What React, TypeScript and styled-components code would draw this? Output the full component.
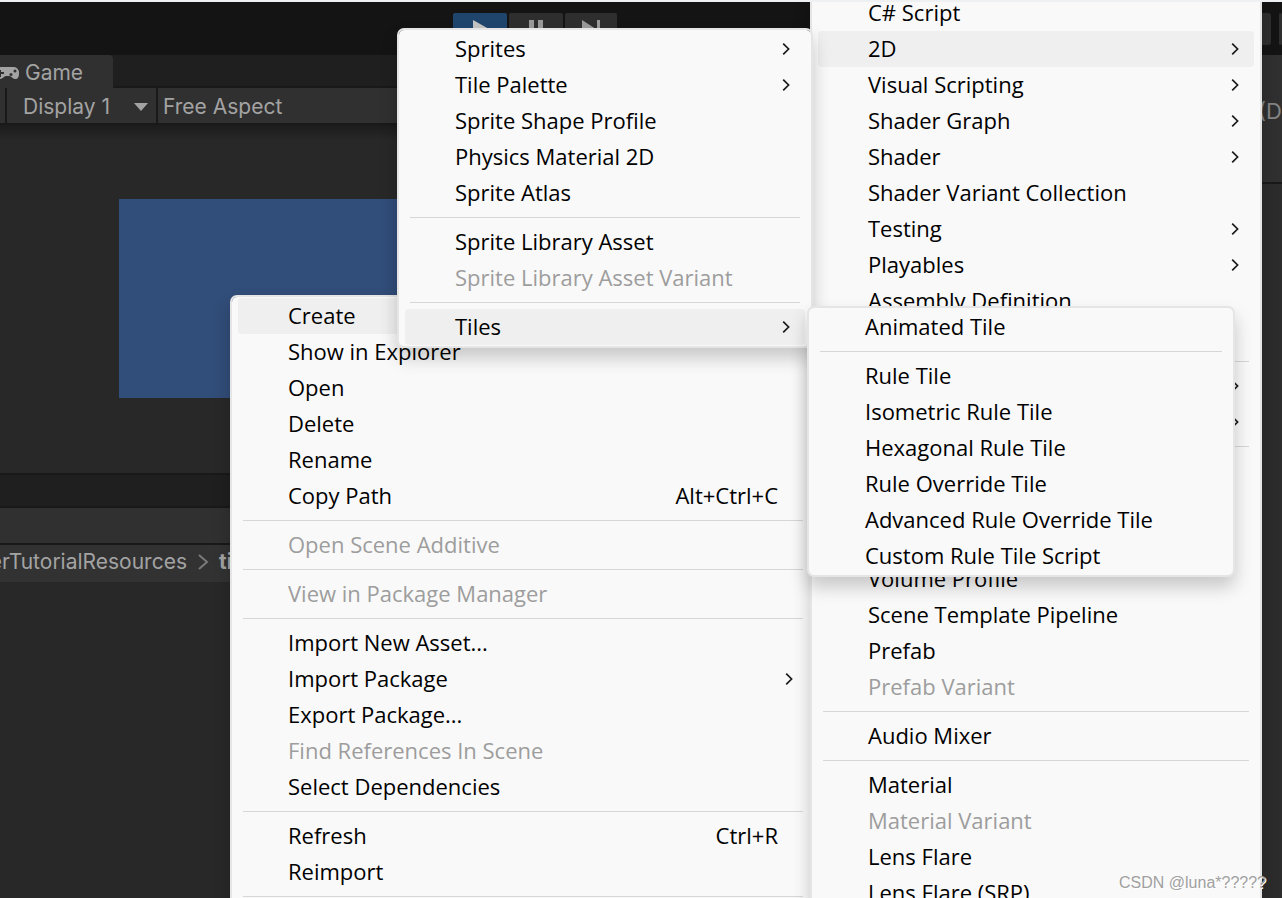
import React from "react";
import styled, { createGlobalStyle } from "styled-components";

const GlobalStyle = createGlobalStyle`
  * { box-sizing: border-box; }
  body { margin: 0; background: #282828; }
  button { font: inherit; border: 0; margin: 0; text-align: left; }
`;

const Editor = styled.div`
  position: relative;
  display: flex;
  flex-direction: column;
  height: 100vh;
  overflow: hidden;
  border-top: 2px solid #eff0f2;
  background: #141414;
  color: #a3a3a3;
  font: 21px/26px Inter, "Liberation Sans", sans-serif;
`;

const TopBar = styled.header`
  display: flex;
  justify-content: space-between;
  flex: 0 0 53px;
  padding: 11px 0 0 453px;
`;

const ButtonGroup = styled.div`
  display: flex;
  gap: 2px;
`;

const PlayButton = styled.button<{ $active?: boolean }>`
  display: flex;
  align-items: center;
  justify-content: center;
  width: 54px;
  height: 32px;
  padding: 0;
  border-radius: 2px;
  background: ${(p) => (p.$active ? "#20456d" : "#2e2e2e")};
  &:last-child { width: 52px; }
`;

const LayoutButtons = styled.div`
  display: flex;
  gap: 8px;
`;

const LayoutButton = styled.button<{ $width: number }>`
  width: ${(p) => p.$width}px;
  height: 32px;
  padding: 0;
  border-radius: 3px;
  background: #2e2e2e;
`;

const Workspace = styled.div`
  display: flex;
  flex: 1;
  min-height: 0;
`;

const MainColumn = styled.div`
  display: flex;
  flex-direction: column;
  flex: 1;
  min-width: 0;
`;

const TabStrip = styled.div`
  display: flex;
  flex: 0 0 33px;
  background: #1f1f1f;
  box-shadow: inset 0 -2px #191919;
`;

const Tab = styled.button`
  display: flex;
  align-items: center;
  gap: 6px;
  width: 113px;
  padding: 2px 0 0;
  border-radius: 0 4px 0 0;
  color: #a3a3a3;
  background: #303030;
`;

const Toolbar = styled.div`
  display: flex;
  flex: 0 0 37px;
  border-bottom: 2px solid #191919;
  background: #303030;
`;

const ToolbarStub = styled.div`
  width: 7px;
  border-right: 2px solid #191919;
`;

const ToolButton = styled.button<{ $width?: number }>`
  display: flex;
  align-items: center;
  justify-content: space-between;
  width: ${(p) => (p.$width ? `${p.$width}px` : "auto")};
  padding: 2px 8px 0 16px;
  border-right: 2px solid #191919;
  color: #a3a3a3;
  background: none;
  & + & { padding-left: 5px; border-right: 0; }
`;

const Viewport = styled.div`
  flex: 0 0 348px;
  padding: 74px 300px 0 119px;
  background: linear-gradient(#1c1c1c, #282828 16px);
`;

const Camera = styled.div`
  height: 199px;
  background: #314d79;
`;

const ProjectTabs = styled(TabStrip)`
  flex-basis: 35px;
  border-top: 2px solid #191919;
`;

const Breadcrumb = styled.nav`
  display: flex;
  align-items: center;
  gap: 10px;
  flex: 0 0 37px;
  padding-bottom: 3px;
  background: #323232;
  white-space: nowrap;
  a { color: #a3a3a3; text-decoration: none; }
  > a { font-weight: 700; }
`;

const Crop = styled.span`
  display: flex;
  justify-content: flex-end;
  width: 187px;
  overflow: hidden;
`;

const Assets = styled.div`
  flex: 1;
  background: #282828;
`;

const Inspector = styled.aside`
  display: flex;
  flex-direction: column;
  flex: 0 0 22px;
  background: #2c2c2c;
`;

const InspectorHead = styled.div`
  flex: 0 0 129px;
  padding: 43px 0 0 2px;
  overflow: hidden;
  border-bottom: 2px solid #191919;
  background: #303030;
  color: #858585;
  font-size: 22px;
`;

const MenuPanel = styled.div<{ $x: number; $y: number; $w: number }>`
  position: absolute;
  left: ${(p) => p.$x}px;
  top: ${(p) => p.$y}px;
  width: ${(p) => p.$w}px;
  padding: 1px 6px;
  border: 2px solid #e5e5e5;
  border-radius: 7px;
  background: #f9f9f9;
  background-clip: padding-box;
  box-shadow: 0 10px 18px rgba(0, 0, 0, 0.2);
  color: #000;
  font: 22px/34px "Open Sans", "Noto Sans", sans-serif;
`;

const MenuItem = styled.button<{ $active?: boolean }>`
  display: flex;
  align-items: center;
  justify-content: space-between;
  width: 100%;
  height: 36px;
  padding: 0 30px 0 50px;
  border-radius: 4px;
  white-space: nowrap;
  color: #000;
  background: ${(p) => (p.$active ? "#efefef" : "transparent")};
  &:disabled { color: #9d9d9d; }
  svg { margin-right: -15px; margin-left: auto; }
`;

const ItemText = styled.span`
  padding-bottom: 2px;
`;

const Separator = styled.hr`
  height: 1px;
  margin: 6px 5px;
  border: 0;
  background: #d7d7d7;
`;

const Watermark = styled.div`
  position: absolute;
  right: 16px;
  bottom: 3px;
  color: #a0a0a0;
  font: 16px/24px "Liberation Sans", sans-serif;
  text-shadow: 1px 1px #fff;
`;

type Entry = { label?: string; keys?: string; sub?: boolean; off?: boolean; active?: boolean } | "-";

const assetEntries: Entry[] = [
  { label: "Create", active: true },
  { label: "Show in Explorer" },
  { label: "Open" },
  { label: "Delete" },
  { label: "Rename" },
  { label: "Copy Path", keys: "Alt+Ctrl+C" },
  "-",
  { label: "Open Scene Additive", off: true },
  "-",
  { label: "View in Package Manager", off: true },
  "-",
  { label: "Import New Asset..." },
  { label: "Import Package", sub: true },
  { label: "Export Package..." },
  { label: "Find References In Scene", off: true },
  { label: "Select Dependencies" },
  "-",
  { label: "Refresh", keys: "Ctrl+R" },
  { label: "Reimport" },
  "-",
  {},
];

const createEntries: Entry[] = [
  { label: "C# Script" },
  { label: "2D", sub: true, active: true },
  { label: "Visual Scripting", sub: true },
  { label: "Shader Graph", sub: true },
  { label: "Shader", sub: true },
  { label: "Shader Variant Collection" },
  { label: "Testing", sub: true },
  { label: "Playables", sub: true },
  { label: "Assembly Definition" },
  {},
  "-",
  { sub: true },
  { sub: true },
  "-",
  {},
  {},
  {},
  { label: "Volume Profile" },
  { label: "Scene Template Pipeline" },
  { label: "Prefab" },
  { label: "Prefab Variant", off: true },
  "-",
  { label: "Audio Mixer" },
  "-",
  { label: "Material" },
  { label: "Material Variant", off: true },
  { label: "Lens Flare" },
  { label: "Lens Flare (SRP)" },
];

const twoDEntries: Entry[] = [
  { label: "Sprites", sub: true },
  { label: "Tile Palette", sub: true },
  { label: "Sprite Shape Profile" },
  { label: "Physics Material 2D" },
  { label: "Sprite Atlas" },
  "-",
  { label: "Sprite Library Asset" },
  { label: "Sprite Library Asset Variant", off: true },
  "-",
  { label: "Tiles", sub: true, active: true },
];

const tileEntries: Entry[] = [
  { label: "Animated Tile" },
  "-",
  { label: "Rule Tile" },
  { label: "Isometric Rule Tile" },
  { label: "Hexagonal Rule Tile" },
  { label: "Rule Override Tile" },
  { label: "Advanced Rule Override Tile" },
  { label: "Custom Rule Tile Script" },
];

const Chevron = () => (
  <svg width="8" height="12" viewBox="0 0 8 12" fill="none" stroke="#1b1b1b" strokeWidth="1.7">
    <path d="M1.2 .7L6.600 6 1.200 11.300" />
  </svg>
);

function Menu({ entries, x, y, w }: { entries: Entry[]; x: number; y: number; w: number }) {
  return (
    <MenuPanel role="menu" $x={x} $y={y} $w={w}>
      {entries.map((e, i) =>
        e === "-" ? (
          <Separator key={i} />
        ) : (
          <MenuItem key={i} role="menuitem" $active={e.active} disabled={e.off}>
            {e.label && <ItemText>{e.label}</ItemText>}
            {e.keys && <ItemText>{e.keys}</ItemText>}
            {e.sub && <Chevron />}
          </MenuItem>
        )
      )}
    </MenuPanel>
  );
}

export default function App() {
  return (
    <>
      <GlobalStyle />
      <Editor>
        <TopBar>
          <ButtonGroup>
            <PlayButton $active aria-label="Play">
              <svg width="18" height="18" viewBox="0 0 18 18" fill="#c4c4c4"><path d="M2 0l16 9-16 9z" /></svg>
            </PlayButton>
            <PlayButton aria-label="Pause">
              <svg width="18" height="18" viewBox="0 0 18 18" fill="#9a9a9a"><path d="M2 0h5v18H2zM11 0h5v18h-5z" /></svg>
            </PlayButton>
            <PlayButton aria-label="Step">
              <svg width="18" height="18" viewBox="0 0 18 18" fill="#9a9a9a"><path d="M0 0l14 9-14 9zM15 0h3v18h-3z" /></svg>
            </PlayButton>
          </ButtonGroup>
          <LayoutButtons>
            <LayoutButton $width={60} aria-label="Layers" />
            <LayoutButton $width={3} aria-label="Layout" />
          </LayoutButtons>
        </TopBar>
        <Workspace>
          <MainColumn>
            <TabStrip>
              <Tab>
                <svg width="19" height="14" viewBox="0 0 19 14">
                  <path fill="#a3a3a3" d="M0 1h14a5.500 5.500 0 0 1 5 6c0 4-1 6-4 6-2.500 0-3.500-3-5.500-3H6c-2 0-3 3-6 3z" />
                  <path fill="#303030" d="M0 4h1v2h3v2H1v3H0z" />
                  <circle cx="11" cy="8.500" r="1.500" fill="#303030" />
                  <circle cx="15" cy="5" r="1.500" fill="#303030" />
                </svg>
                Game
              </Tab>
            </TabStrip>
            <Toolbar>
              <ToolbarStub />
              <ToolButton $width={151}>
                Display 1
                <svg width="14" height="8" viewBox="0 0 14 8" fill="#a3a3a3"><path d="M0 0h14L7 8z" /></svg>
              </ToolButton>
              <ToolButton>Free Aspect</ToolButton>
            </Toolbar>
            <Viewport>
              <Camera />
            </Viewport>
            <ProjectTabs />
            <Toolbar />
            <Breadcrumb>
              <Crop><a href="#resources">erTutorialResources</a></Crop>
              <svg width="12" height="16" viewBox="0 0 12 16" fill="none" stroke="#7a7a7a" strokeWidth="2"><path d="M2 1l8 7-8 7" /></svg>
              <a href="#tiles">ti</a>
            </Breadcrumb>
            <Assets />
          </MainColumn>
          <Inspector>
            <InspectorHead>(D</InspectorHead>
          </Inspector>
        </Workspace>
        <Menu entries={assetEntries} x={230} y={293} w={586} />
        <Menu entries={createEntries} x={810} y={-10} w={452} />
        <Menu entries={twoDEntries} x={397} y={26} w={416} />
        <Menu entries={tileEntries} x={807} y={304} w={428} />
        <Watermark>CSDN @luna*?????</Watermark>
      </Editor>
    </>
  );
}
